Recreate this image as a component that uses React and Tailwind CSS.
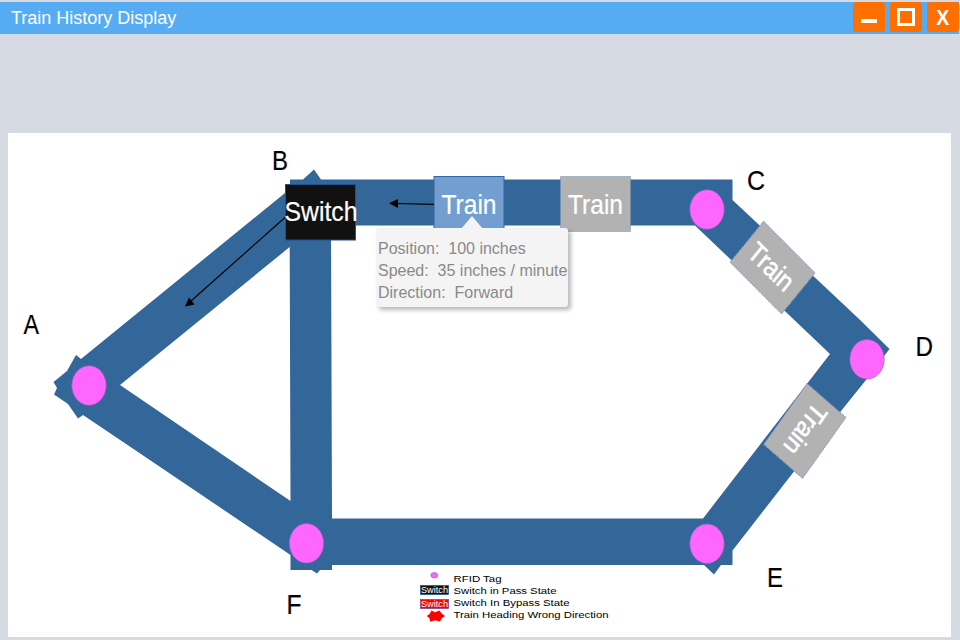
import React from 'react';

const TRACK =
  'M76 355L81 359L285 193L290 189V179.5H303L314 169.5L321 179.5H732.5V200L858 318L889.5 349L866 380L841 411L732.5 550.5V565H721L714 574.5L704 565H332V570H320L317 573.5L311.5 570H290.5V555L135 450L83 415L78 418.5L68 404L54 394.5L57 388L53.5 382L67 371Z' +
  'M120 385L290.5 501L289.7 247Z' +
  'M331 225.5L332 518.5H703L830 354L695 225.5Z';

const TAGS = [
  [89, 385.5],
  [707, 209.5],
  [867, 359.3],
  [707, 543.7],
  [306.5, 543.3],
];

const STATIONS = [
  ['A', 23.5, 333.5, 15.5],
  ['B', 272, 170, 16],
  ['C', 747, 189.5, 18],
  ['D', 915.5, 355.5, 17.5],
  ['E', 767, 587, 16],
  ['F', 286.5, 614, 15],
];

const LEGEND = [
  ['RFID Tag', 581.7, 48],
  ['Switch in Pass State', 594, 103],
  ['Switch In Bypass State', 605.8, 116],
  ['Train Heading Wrong Direction', 618, 155],
];

const TIP_LINES = [
  ['Position:', '100 inches'],
  ['Speed:', '35 inches / minute'],
  ['Direction:', 'Forward'],
];

function Label({ x, y, w, size, children, fill = '#fff', weight = 0 }) {
  return (
    <text
      x={x}
      y={y}
      fontSize={size}
      textLength={w}
      lengthAdjust="spacingAndGlyphs"
      fill={fill}
      stroke={weight ? fill : undefined}
      strokeWidth={weight || undefined}
    >
      {children}
    </text>
  );
}

function Train({ transform, active, textWidth = 55, weight = 0.2 }) {
  return (
    <g transform={transform}>
      <rect
        x="0.5"
        y="0.5"
        width="70"
        height="55"
        fill={active ? '#729fcf' : '#b2b2b2'}
        stroke={active ? '#3465a4' : '#7590bb'}
        strokeDasharray={active ? undefined : '1 1'}
      />
      <Label x={8} y={38} w={textWidth} size={28} weight={weight}>Train</Label>
    </g>
  );
}

function WindowButton({ label, children }) {
  return (
    <button aria-label={label} className="h-[30px] w-8 rounded-[3px] bg-[#ff6f00]">
      <svg viewBox="0 0 32 30" className="block h-[30px] w-8">{children}</svg>
    </button>
  );
}

function TrackMap() {
  return (
    <svg viewBox="8 133 943 504" className="block h-[504px] w-[943px]">
      <path d={TRACK} fill="#336699" fillRule="evenodd" />

      <Train transform="translate(433.5 176)" active />
      <Train transform="translate(560 176)" />
      <Train transform="matrix(0.736 0.739 -0.609 0.745 763.5 220.5)" textWidth={52} weight={0.6} />
      <Train transform="matrix(-0.62 0.871 -0.709 -0.618 846.7 417.3)" textWidth={52} weight={0.6} />

      <rect x="285.5" y="184.5" width="70" height="55.5" fill="#111" stroke="#234f91" />
      <Label x={284.5} y={221} w={73} size={28} weight={0.2}>Switch</Label>

      <path d="M434 204.3L396 203.5M285 217.5L191 301" stroke="#000" strokeWidth="1.2" />
      <path d="M389 203.3L398 199V208ZM185 306.5L189 297.5L194.5 304.5Z" />

      {TAGS.map(([x, y]) => (
        <ellipse key={`${x}-${y}`} cx={x} cy={y} rx="17.2" ry="19.8" fill="#ff66ff" stroke="#8864c0" strokeWidth="0.7" />
      ))}

      {STATIONS.map(([name, x, y, w]) => (
        <Label key={name} x={x} y={y} w={w} size={28} fill="#000" weight={0.2}>{name}</Label>
      ))}

      <ellipse cx="434.3" cy="575.3" rx="3.4" ry="2.7" fill="#ff66ff" stroke="#8060b8" strokeWidth="0.7" />
      <rect x="420.5" y="585.5" width="28" height="9" fill="#111" stroke="#234f91" strokeWidth="0.7" />
      <Label x={421} y={593.3} w={27} size={8.5}>Switch</Label>
      <rect x="420.5" y="599.5" width="28" height="9" fill="#f00" stroke="#7a3f80" strokeWidth="0.7" />
      <Label x={421} y={607} w={27} size={8.5}>Switch</Label>
      <path
        d="M431.5 610.5L435 612.2L439.5 610.5L441.5 613.5L445 616L441.7 618.3L440 621.5L435 620.2L430 621.7L429.5 618.3L426.8 616L429.8 613.8Z"
        fill="#f00"
      />
      {LEGEND.map(([text, y, w]) => (
        <Label key={text} x={453.5} y={y} w={w} size={9.6} fill="#000">{text}</Label>
      ))}
    </svg>
  );
}

function Tooltip() {
  return (
    <div className="absolute left-[368px] top-[95px] h-[79px] w-48 rounded-[3px] bg-[#f4f4f4] pl-0.5 pt-2.5 shadow-[3px_3px_4px_rgba(0,0,0,0.28)]">
      <svg viewBox="0 0 22 13" className="absolute left-[85px] top-[-12px] h-[13px] w-[22px]">
        <path d="M0 13L11 0L22 13Z" fill="#f4f4f4" />
      </svg>
      {TIP_LINES.map(([name, value]) => (
        <div key={name} className="whitespace-pre text-base leading-[22px] text-[#8a8a8a]">
          {`${name}  ${value}`}
        </div>
      ))}
    </div>
  );
}

export default function App() {
  return (
    <div
      className="h-[640px] w-[960px] overflow-hidden bg-[#d6dae2] pt-0.5"
      style={{ fontFamily: '"Liberation Sans", Arial, sans-serif' }}
    >
      <header className="flex h-8 w-[959px] items-start justify-between bg-[#55acf3] pl-[11px]">
        <h1 className="text-lg leading-8 text-white">Train History Display</h1>
        <div className="flex gap-[5px]">
          <WindowButton label="Minimize">
            <path d="M8 17H24V21H8Z" fill="#fff" />
          </WindowButton>
          <WindowButton label="Maximize">
            <path d="M8.5 7.5H23.5V22.5H8.5Z" fill="none" stroke="#fff" strokeWidth="3" />
          </WindowButton>
          <WindowButton label="Close">
            <text x="9.2" y="23" fontSize="22" fontWeight="700" textLength="13" lengthAdjust="spacingAndGlyphs" fill="#fff">X</text>
          </WindowButton>
        </div>
      </header>
      <main className="relative ml-2 mt-[99px] h-[504px] w-[943px] bg-white">
        <TrackMap />
        <Tooltip />
      </main>
    </div>
  );
}
